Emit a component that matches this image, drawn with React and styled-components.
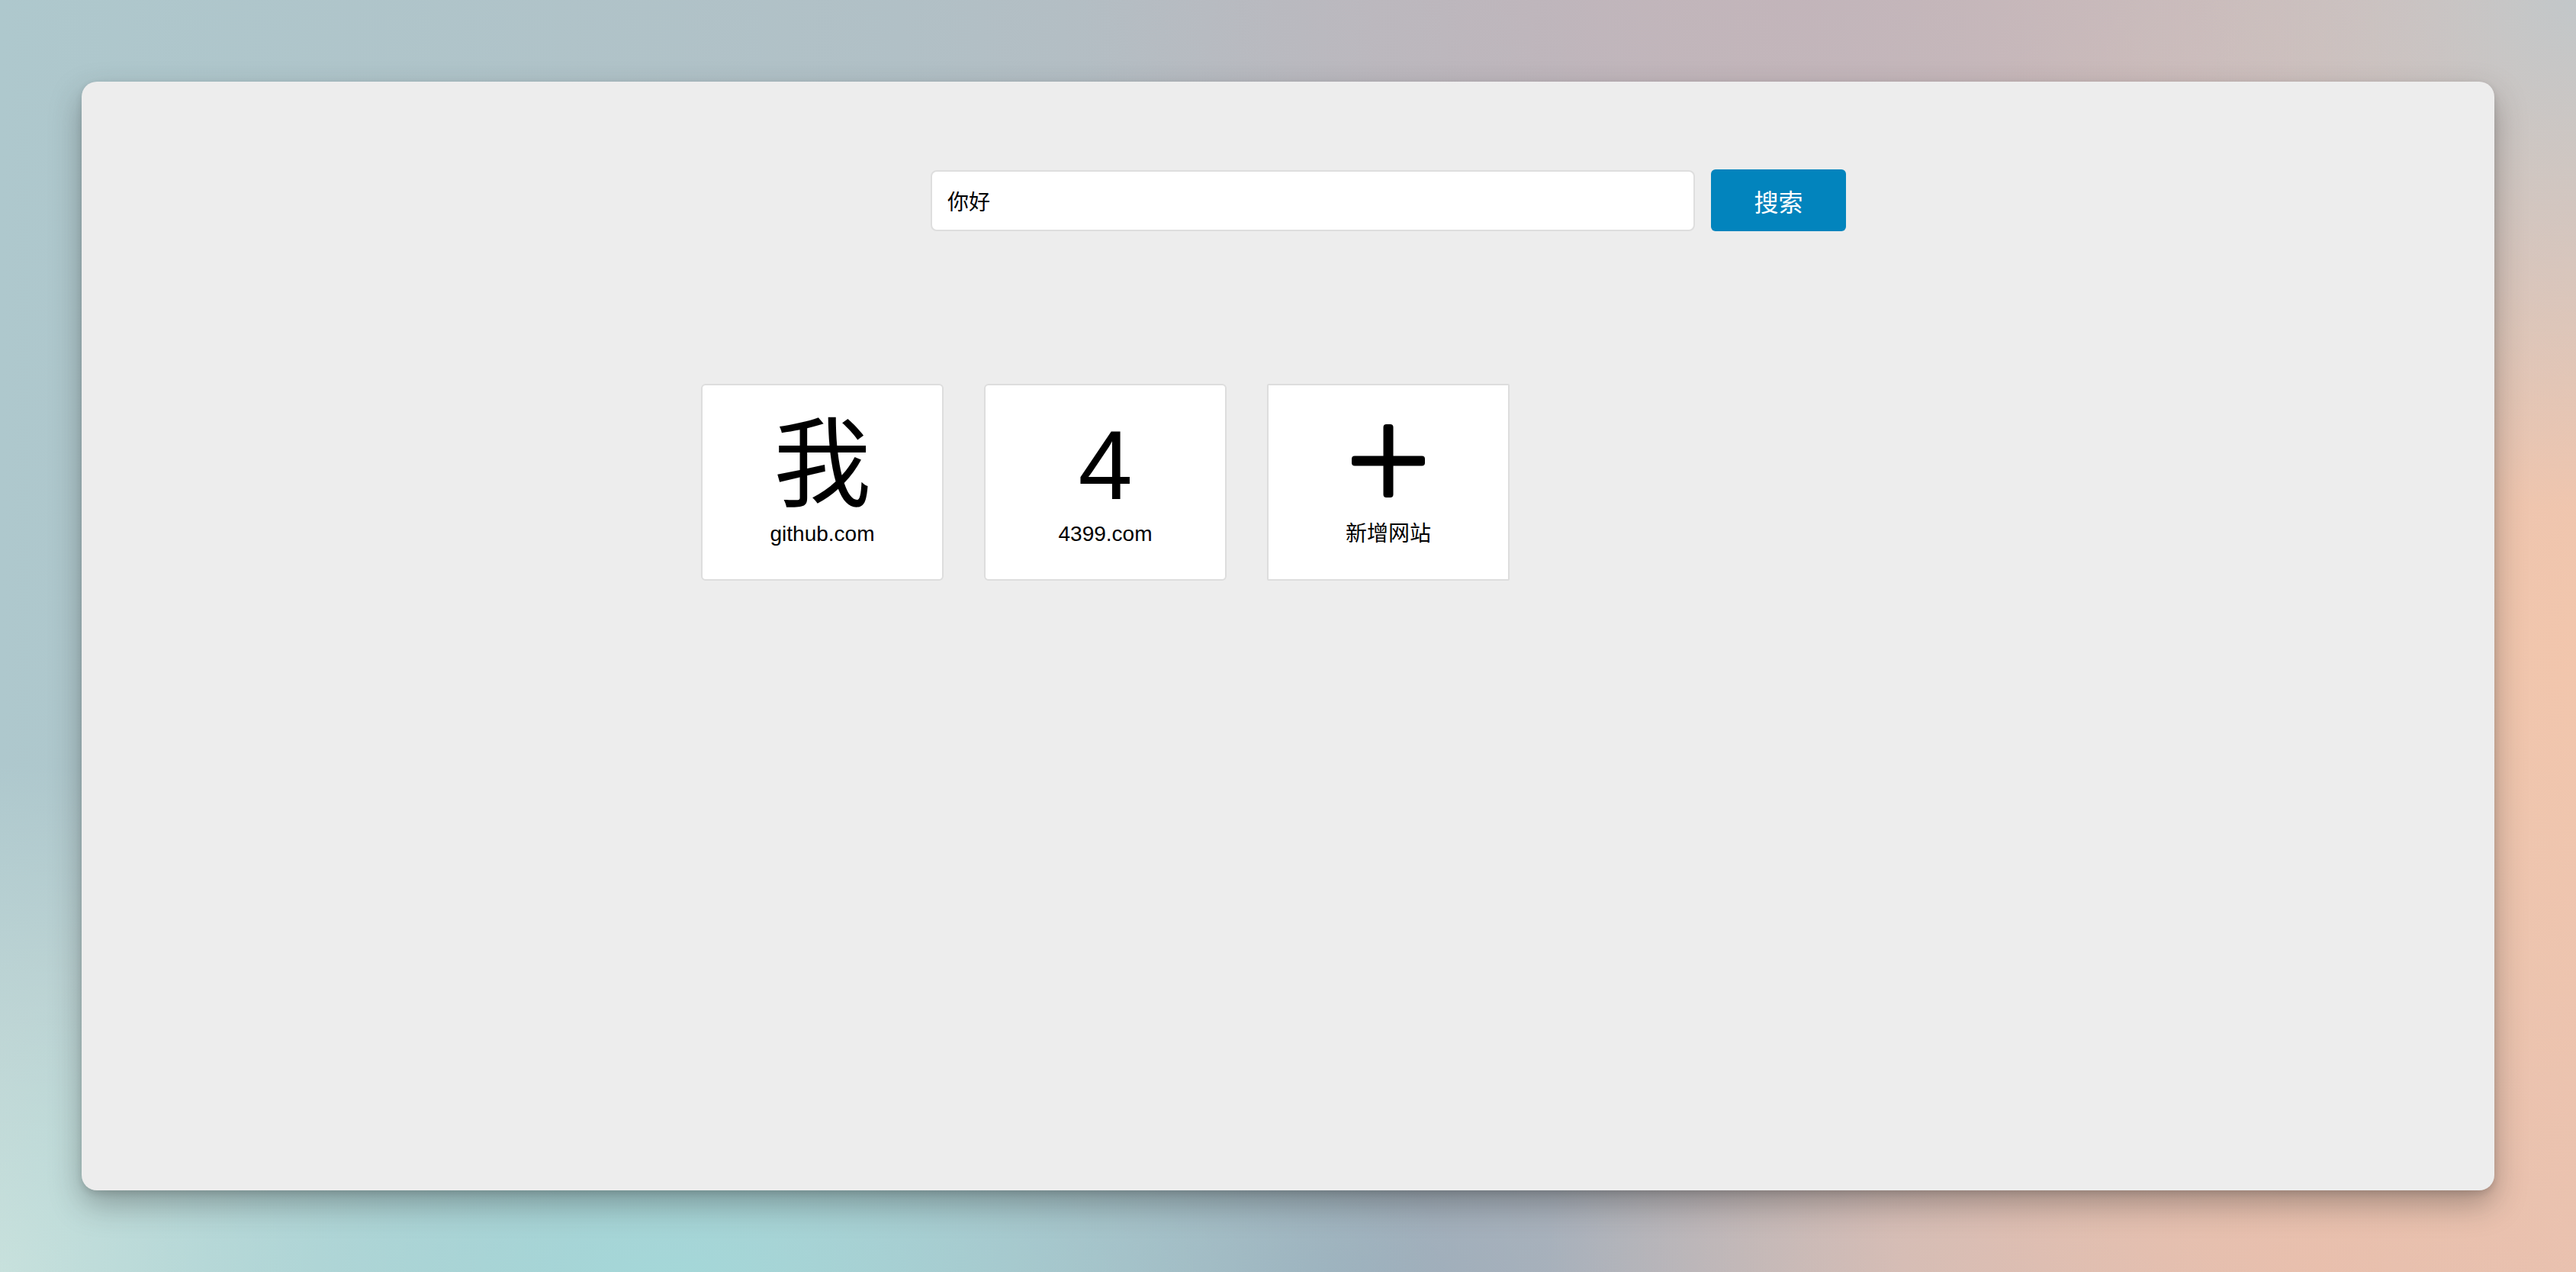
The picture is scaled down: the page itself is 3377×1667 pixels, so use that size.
import React from "react";
import styled, { createGlobalStyle } from "styled-components";

const GlobalStyle = createGlobalStyle`
  html, body {
    margin: 0;
    padding: 0;
    height: 100%;
  }
  body {
    font-family: "Liberation Sans", "Noto Sans CJK SC", sans-serif;
    color: #000;
  }
  #root { height: 100%; }
  * { box-sizing: border-box; }
`;

const Page = styled.div`
  height: 100vh;
  padding: 107px;
  background:
    radial-gradient(ellipse 28% 40% at 70% 0%, rgba(194, 180, 186, 0.9), rgba(194, 180, 186, 0) 100%),
    radial-gradient(ellipse 22% 40% at 100% 0%, rgba(194, 199, 201, 1), rgba(194, 199, 201, 0) 100%),
    radial-gradient(ellipse 40% 60% at 102% 52%, rgba(242, 198, 172, 1), rgba(242, 198, 172, 0) 100%),
    radial-gradient(ellipse 30% 45% at 90% 100%, rgba(232, 190, 172, 0.9), rgba(232, 190, 172, 0) 100%),
    radial-gradient(ellipse 30% 40% at 26% 102%, rgba(164, 216, 217, 1), rgba(164, 216, 217, 0) 100%),
    radial-gradient(ellipse 22% 40% at 0% 100%, rgba(205, 226, 221, 1), rgba(205, 226, 221, 0) 100%),
    radial-gradient(ellipse 22% 35% at 52% 102%, rgba(150, 170, 185, 0.85), rgba(150, 170, 185, 0) 100%),
    linear-gradient(to right, #aec8cd 0%, #b1c0c6 35%, #bab8be 60%, #e6c4b6 100%);
`;

const Card = styled.main`
  height: 100%;
  background: #ededed;
  border-radius: 20px;
  box-shadow: 0 18px 40px rgba(40, 40, 40, 0.35), 0 4px 10px rgba(0, 0, 0, 0.12);
  padding-top: 115px;
  display: flex;
  flex-direction: column;
`;

const SearchForm = styled.form`
  display: flex;
  gap: 21px;
  margin-left: 1113px;
  align-items: center;
`;

const SearchInput = styled.input`
  width: 1002px;
  height: 80px;
  border: 2px solid #dedede;
  border-radius: 8px;
  background: #fff;
  padding: 0 20px;
  font-family: "Liberation Sans", "Noto Sans CJK SC", sans-serif;
  font-size: 28px;
  color: #000;
  outline: none;
`;

const SearchButton = styled.button`
  width: 177px;
  height: 81px;
  border: none;
  border-radius: 6px;
  background: #0284bd;
  color: #fff;
  font-family: "Liberation Sans", "Noto Sans CJK SC", sans-serif;
  font-size: 32px;
  cursor: pointer;
`;

const TileGrid = styled.section`
  display: flex;
  gap: 53px;
  margin-top: 200px;
  margin-left: 812px;
`;

const Tile = styled.div`
  width: 318px;
  height: 258px;
  background: #fff;
  border: 2px solid #dddddd;
  border-radius: ${(p) => (p.$square ? "2px" : "6px")};
  display: flex;
  flex-direction: column;
  align-items: center;
  justify-content: center;
  gap: 8px;
`;

const Symbol = styled.div`
  height: 128px;
  font-size: 128px;
  line-height: 128px;
  display: flex;
  align-items: center;
  justify-content: center;
`;

const Label = styled.div`
  font-size: 28px;
  line-height: 36px;
`;

const PlusIcon = () => (
  <svg width="96" height="96" viewBox="0 0 96 96" style={{ marginTop: -12 }}>
    <rect x="41.5" y="0" width="13" height="96" rx="4" fill="#000" />
    <rect x="0" y="41.5" width="96" height="13" rx="4" fill="#000" />
  </svg>
);

const sites = [
  { icon: "我", name: "github.com" },
  { icon: "4", name: "4399.com" },
];

export default function App() {
  return (
    <>
      <GlobalStyle />
      <Page>
        <Card>
          <SearchForm onSubmit={(e) => e.preventDefault()}>
            <SearchInput defaultValue="你好" />
            <SearchButton type="submit">搜索</SearchButton>
          </SearchForm>
          <TileGrid>
            {sites.map((s) => (
              <Tile key={s.name}>
                <Symbol>{s.icon}</Symbol>
                <Label>{s.name}</Label>
              </Tile>
            ))}
            <Tile $square>
              <Symbol>
                <PlusIcon />
              </Symbol>
              <Label>新增网站</Label>
            </Tile>
          </TileGrid>
        </Card>
      </Page>
    </>
  );
}
